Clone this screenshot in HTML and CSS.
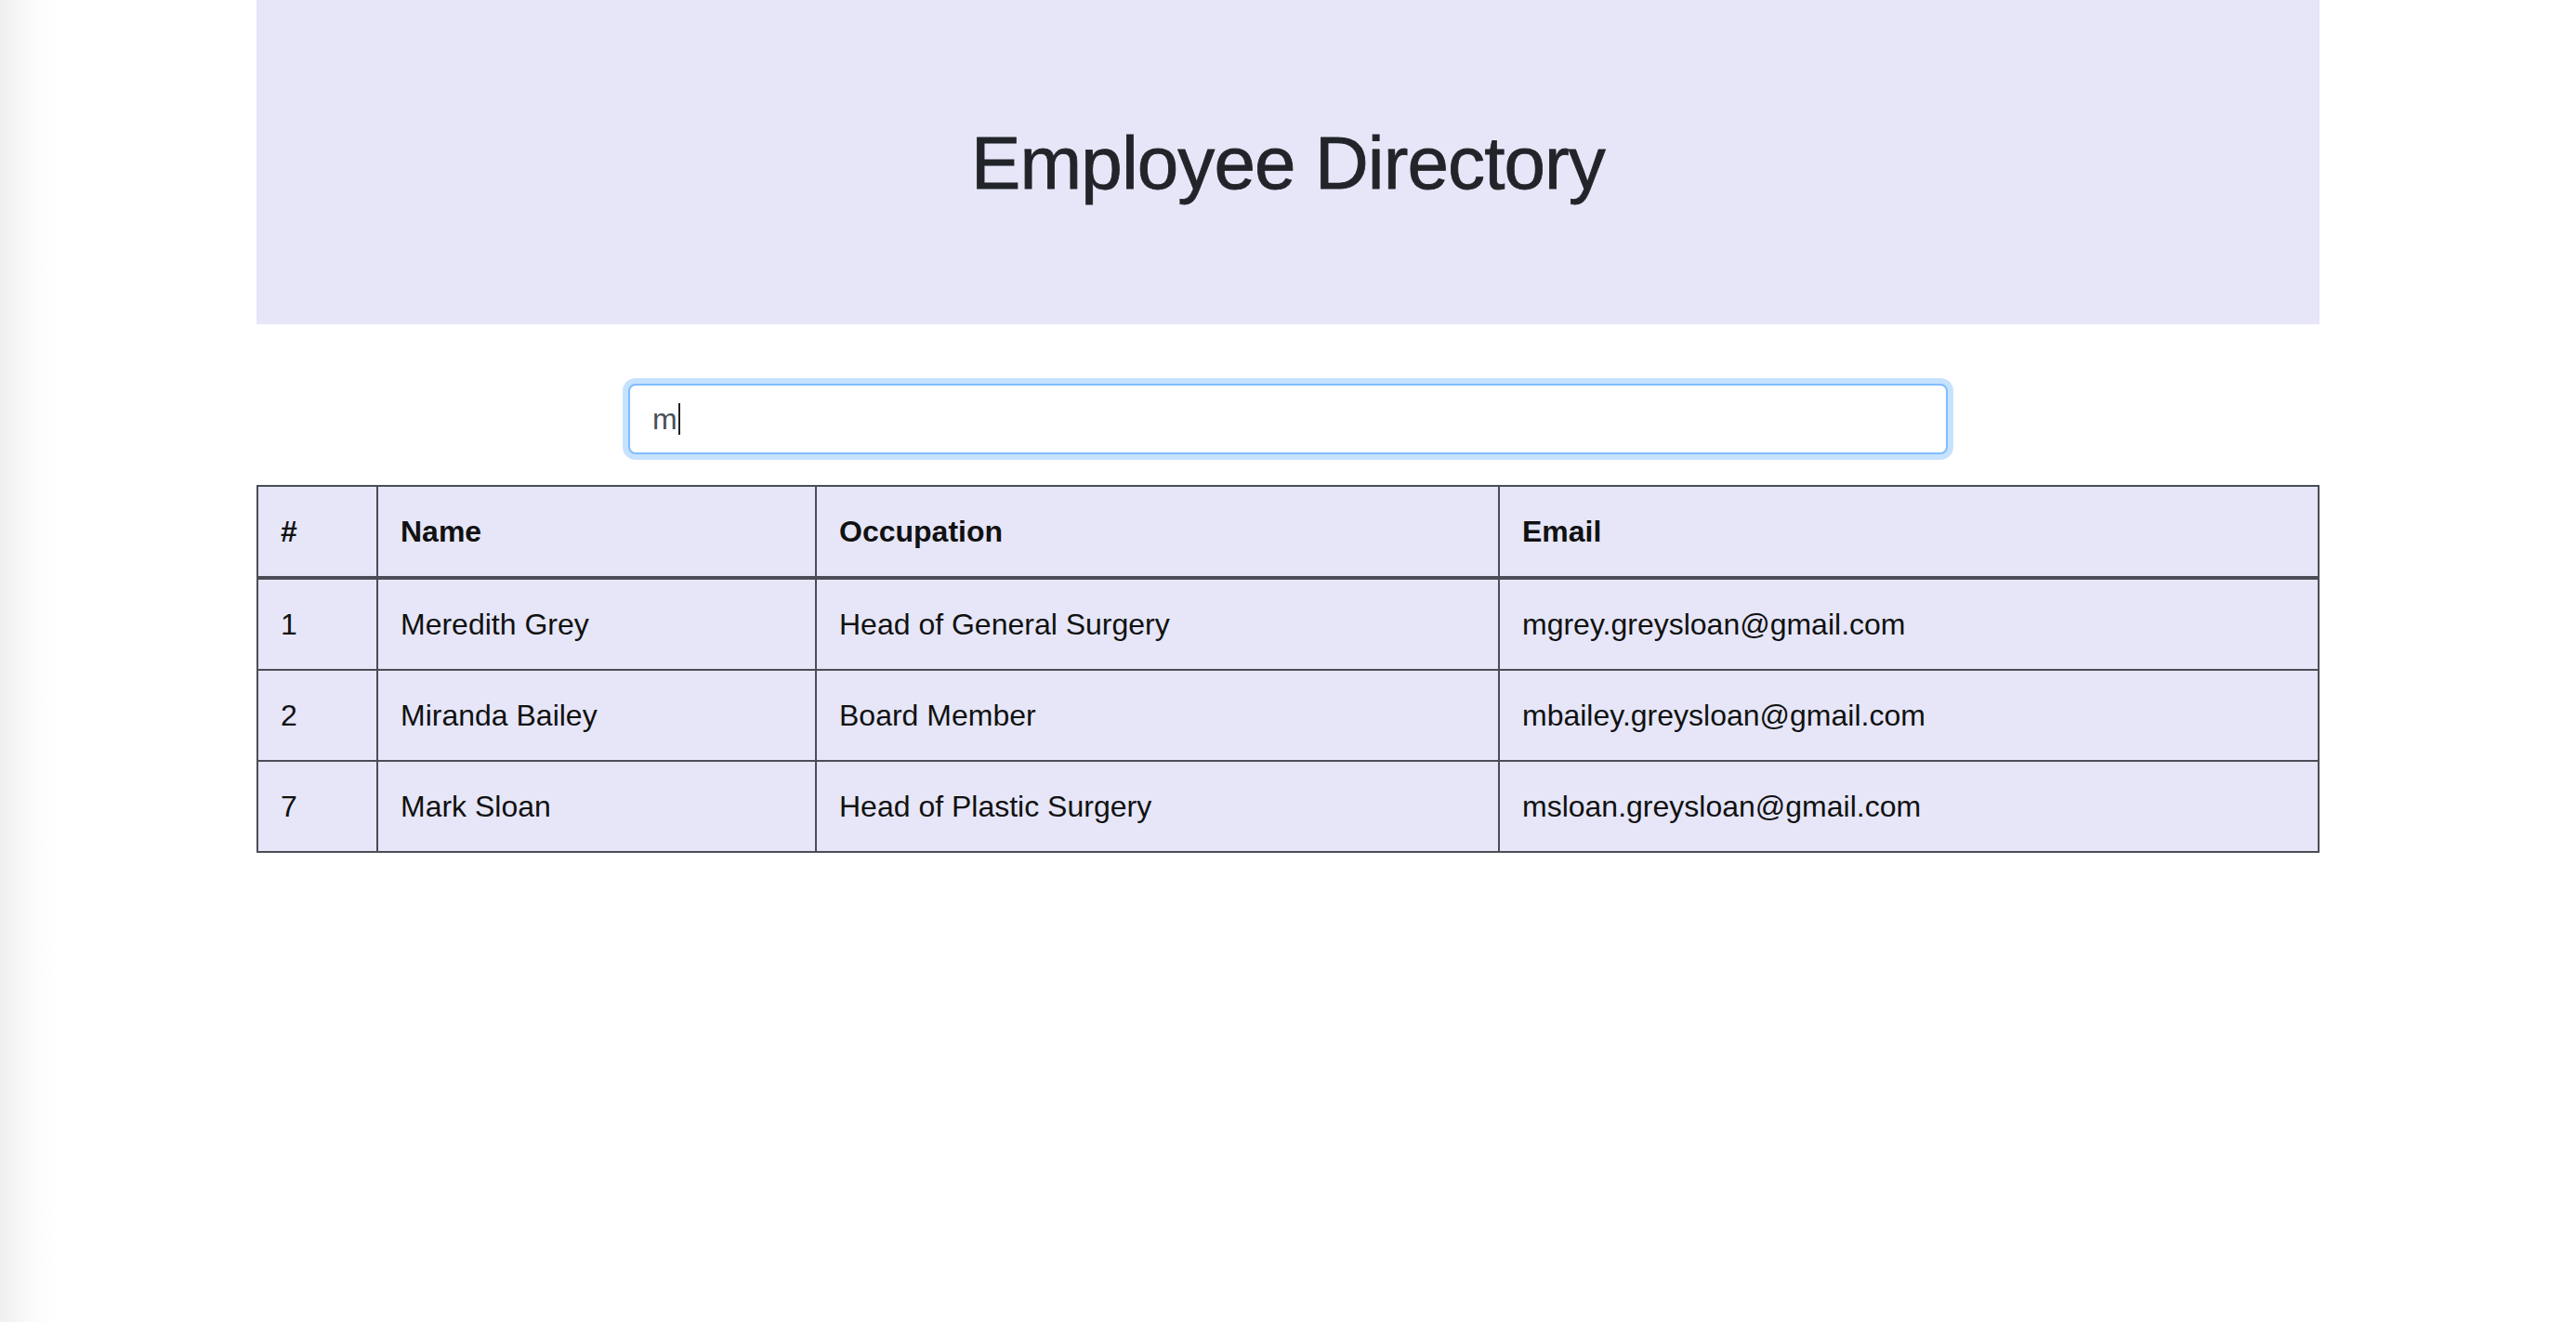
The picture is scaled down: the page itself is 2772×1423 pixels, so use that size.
FILE: index.html
```html
<!DOCTYPE html>
<html lang="en">
<head>
<meta charset="utf-8">
<title>Employee Directory</title>
<link rel="stylesheet" href="styles.css">
</head>
<body>
<div class="container">
  <header class="jumbo">
    <h1 class="title">Employee Directory</h1>
  </header>
  <div class="search" role="textbox" aria-label="Search">m<span class="caret"></span></div>
  <table class="directory">
    <colgroup>
      <col class="col-num">
      <col class="col-name">
      <col class="col-occ">
      <col class="col-email">
    </colgroup>
    <thead>
      <tr><th>#</th><th>Name</th><th>Occupation</th><th>Email</th></tr>
    </thead>
    <tbody>
      <tr><td>1</td><td>Meredith Grey</td><td>Head of General Surgery</td><td>mgrey.greysloan@gmail.com</td></tr>
      <tr><td>2</td><td>Miranda Bailey</td><td>Board Member</td><td>mbailey.greysloan@gmail.com</td></tr>
      <tr><td>7</td><td>Mark Sloan</td><td>Head of Plastic Surgery</td><td>msloan.greysloan@gmail.com</td></tr>
    </tbody>
  </table>
</div>
</body>
</html>
```

FILE: styles.css
```css
html, body {
  margin: 0;
  padding: 0;
}
body {
  min-height: 100vh;
  font-family: "Liberation Sans", Arial, sans-serif;
  font-size: 32px;
  line-height: 1.5;
  color: #212529;
  background: linear-gradient(to right, #efefef 0px, #f7f7f7 20px, #fcfcfc 40px, #ffffff 64px) no-repeat;
  background-color: #ffffff;
}
.container {
  width: 2220px;
  margin: 0 auto;
}
.jumbo {
  background: #e6e6f8;
  padding: 128px 0 125px;
  text-align: center;
}
.title {
  margin: 0;
  font-size: 80px;
  font-weight: 500;
  line-height: 96px;
  letter-spacing: -0.9px;
  color: #212529;
  -webkit-text-stroke: 0.8px #212529;
}
.search {
  box-sizing: border-box;
  width: 1420px;
  height: 76px;
  margin: 64px auto 33px;
  padding: 12px 24px;
  border: 2px solid #80bdff;
  border-radius: 8px;
  box-shadow: 0 0 0 6px rgba(0, 123, 255, 0.22);
  background: #fff;
  color: #495057;
  font-size: 32px;
  line-height: 48px;
  display: flex;
  align-items: center;
}
.caret {
  display: inline-block;
  width: 2px;
  height: 34px;
  background: #222;
  margin-left: 1px;
}
.directory {
  width: 2218px;
  border-collapse: collapse;
  table-layout: fixed;
  background: #e6e6f8;
  color: #111;
}
.col-num { width: 129px; }
.col-name { width: 472px; }
.col-occ { width: 735px; }
.col-email { width: 882px; }
.directory th,
.directory td {
  border: 2px solid #4a4d56;
  padding: 24px;
  text-align: left;
  vertical-align: top;
  line-height: 48px;
}
.directory th {
  font-weight: bold;
}
.directory thead th {
  border-bottom: 4px solid #4a4d56;
}
```
